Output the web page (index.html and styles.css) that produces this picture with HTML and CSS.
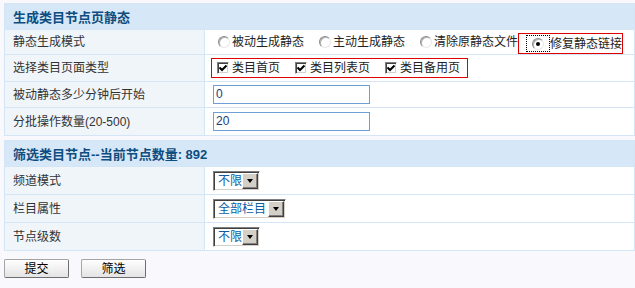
FILE: index.html
```html
<!DOCTYPE html>
<html lang="zh-CN">
<head>
<meta charset="utf-8">
<title>生成类目节点页静态</title>
<link rel="stylesheet" href="styles.css">
</head>
<body>
<div class="page">
  <section class="panel panel-make">
    <div class="head">生成类目节点页静态</div>

    <div class="label">静态生成模式</div>
    <div class="field">
      <label class="opt"><span class="radio"></span>被动生成静态</label>
      <label class="opt"><span class="radio"></span>主动生成静态</label>
      <label class="opt opt-last"><span class="radio"></span>清除原静态文件</label>
      <label class="opt opt-mark"><span class="focus"><span class="radio on"></span></span>修复静态链接</label>
    </div>

    <div class="label">选择类目页面类型</div>
    <div class="field">
      <div class="checks">
        <label class="chk"><span class="box"><svg viewBox="0 0 10 10" width="10" height="10"><path d="M1.5 4.5 L4 7 L8.5 2.5" fill="none" stroke="#000" stroke-width="2"/></svg></span>类目首页</label>
        <label class="chk"><span class="box"><svg viewBox="0 0 10 10" width="10" height="10"><path d="M1.5 4.5 L4 7 L8.5 2.5" fill="none" stroke="#000" stroke-width="2"/></svg></span>类目列表页</label>
        <label class="chk"><span class="box"><svg viewBox="0 0 10 10" width="10" height="10"><path d="M1.5 4.5 L4 7 L8.5 2.5" fill="none" stroke="#000" stroke-width="2"/></svg></span>类目备用页</label>
      </div>
    </div>

    <div class="label">被动静态多少分钟后开始</div>
    <div class="field"><span class="input">0</span></div>

    <div class="label">分批操作数量(20-500)</div>
    <div class="field"><span class="input">20</span></div>
  </section>

  <section class="panel panel-filter">
    <div class="head">筛选类目节点--当前节点数量: 892</div>

    <div class="label">频道模式</div>
    <div class="field"><span class="select sel-short"><span class="val">不限</span><span class="drop"></span></span></div>

    <div class="label">栏目属性</div>
    <div class="field"><span class="select sel-long"><span class="val">全部栏目</span><span class="drop"></span></span></div>

    <div class="label">节点级数</div>
    <div class="field"><span class="select sel-short"><span class="val">不限</span><span class="drop"></span></span></div>
  </section>

  <div class="actions">
    <button class="btn" type="button">提交</button>
    <button class="btn" type="button">筛选</button>
  </div>
</div>
</body>
</html>
```

FILE: styles.css
```css
html, body {
  margin: 0;
  padding: 0;
  overflow: hidden;
}
body {
  background: #f8f8fd;
  font-family: "Liberation Sans", "Noto Sans CJK SC", sans-serif;
  font-size: 12px;
  color: #333;
}
.page {
  padding: 3px 0 0 4px;
}
.panel {
  display: grid;
  grid-template-columns: 199px 1fr;
  gap: 1px;
  width: 631px;
  box-sizing: border-box;
  border: 1px solid #d4e6f5;
  background: #d4e6f5;
}
.panel-make {
  grid-template-rows: 25px 24px 26px 25px 27px;
}
.panel-filter {
  margin-top: 4px;
  grid-template-rows: 25px 27px 27px 27px;
}
.head {
  grid-column: 1 / 3;
  background: #d6e7f7;
  color: #0d4d80;
  font-weight: bold;
  font-size: 13px;
  padding-left: 8px;
  display: flex;
  align-items: center;
}
.label {
  background: #f0f5fa;
  padding-left: 8px;
  display: flex;
  align-items: center;
  color: #333;
  line-height: 16px;
}
.field {
  background: #fff;
  padding-left: 8px;
  display: flex;
  align-items: center;
  white-space: nowrap;
}

/* radios */
.opt {
  display: flex;
  align-items: center;
  color: #222;
  margin-right: 10px;
  line-height: 16px;
}
.opt-last {
  margin-right: 0;
}
.opt .radio {
  margin: 0 2px 0 5px;
}
.radio {
  width: 12px;
  height: 12px;
  box-sizing: border-box;
  border-radius: 50%;
  border: 1px solid;
  border-color: #8a8a8a #e8e8e8 #e8e8e8 #8a8a8a;
  box-shadow: inset 1px 1px 0 #b0b0b0;
  background: #fff;
  display: flex;
  align-items: center;
  justify-content: center;
  flex: none;
}
.radio.on::after {
  content: "";
  width: 4px;
  height: 4px;
  border-radius: 50%;
  background: #000;
}
.opt-mark {
  align-self: flex-end;
  margin: 0;
  height: 21px;
  box-sizing: border-box;
  border: 1px solid #e00000;
  padding: 0 0 0 7px;
}
.focus {
  height: 17px;
  box-sizing: border-box;
  border: 1px dotted #000;
  display: flex;
  align-items: center;
  padding: 0 3px 0 0;
}

/* checkboxes */
.checks {
  display: flex;
  align-items: center;
  height: 20px;
  box-sizing: border-box;
  margin-left: -2px;
  border: 1px solid #e00000;
  padding: 0 7px 0 5px;
  gap: 15px;
}
.chk {
  display: flex;
  align-items: center;
  color: #222;
  line-height: 16px;
}
.box {
  width: 12px;
  height: 12px;
  box-sizing: border-box;
  border: 1px solid;
  border-color: #808080 #fff #fff #808080;
  box-shadow: inset 1px 1px 0 #404040, inset -1px -1px 0 #d4d0c8;
  background: #fff;
  margin-right: 3px;
  display: flex;
  align-items: center;
  justify-content: center;
  flex: none;
}
.box svg {
  display: block;
}

/* text inputs */
.input {
  width: 157px;
  height: 19px;
  box-sizing: border-box;
  border: 1px solid #6e9fd4;
  background: #fff;
  color: #1c3a78;
  padding-left: 2px;
  line-height: 17px;
  font-size: 12px;
}

/* selects */
.select {
  display: flex;
  align-items: center;
  height: 20px;
  box-sizing: border-box;
  border: 1px solid;
  border-color: #808080 #fff #fff #808080;
  box-shadow: inset 1px 1px 0 #404040, inset -1px -1px 0 #d4d0c8;
  background: #fff;
  padding: 2px 1px 2px 2px;
}
.sel-short { width: 47px; }
.sel-long { width: 73px; }
.val {
  flex: 1;
  color: #0a5ea4;
  padding-left: 2px;
  line-height: 16px;
  white-space: nowrap;
}
.drop {
  width: 16px;
  height: 16px;
  box-sizing: border-box;
  background: #d4d0c8;
  border: 1px solid;
  border-color: #fff #404040 #404040 #fff;
  box-shadow: inset -1px -1px 0 #808080;
  display: flex;
  align-items: center;
  justify-content: center;
  flex: none;
}
.drop::after {
  content: "";
  border-left: 3.5px solid transparent;
  border-right: 3.5px solid transparent;
  border-top: 4px solid #000;
  margin: 1px 1px 0 0;
}

/* buttons */
.actions {
  display: flex;
  gap: 12px;
  margin-top: 8px;
}
.btn {
  width: 65px;
  height: 19px;
  box-sizing: border-box;
  border: 1px solid;
  border-color: #a4a4a4 #6e6e6e #6e6e6e #a4a4a4;
  border-radius: 2px;
  background: linear-gradient(#fefefe, #e4e4e4);
  font-family: "Liberation Sans", "Noto Sans CJK SC", sans-serif;
  font-size: 12px;
  color: #000;
  padding: 0;
  line-height: 16px;
}
```
